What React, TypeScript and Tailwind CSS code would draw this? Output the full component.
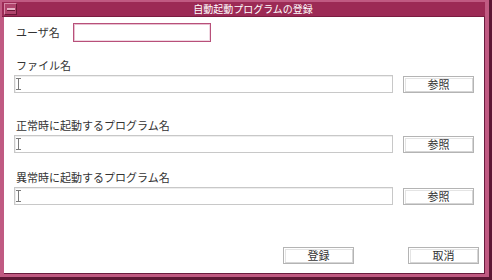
import React from "react";

const font = { fontFamily: '"Noto Sans CJK JP", "Noto Sans", sans-serif' };

const IBeam: React.FC = () => (
  <svg width="5" height="12" viewBox="0 0 5 12" className="ml-[1px]">
    <path d="M0 0.5h5M2.5 0.5v11M0 11.5h5" stroke="#7a7a7a" strokeWidth="1" fill="none" />
  </svg>
);

const Button: React.FC<{ label: string; className?: string }> = ({ label, className = "" }) => (
  <button
    className={`h-[17px] w-[71px] flex items-center justify-center bg-white text-[11px] leading-none text-[#333] border border-[#b4b4b4] shadow-[inset_1px_1px_0_#ffffff,inset_-1px_-1px_0_#d6d6d6,inset_2px_2px_0_#e4e4e4] ${className}`}
  >
    {label}
  </button>
);

const FieldRow: React.FC<{ label: string; labelGap: string }> = ({ label, labelGap }) => (
  <>
    <div className={`${labelGap} ml-[12px] h-[13px] text-[11px] leading-[13px] text-[#333]`}>{label}</div>
    <div className="mt-[3px] ml-[10px] flex items-center gap-[10px]">
      <div className="h-[18px] w-[379px] flex items-center bg-white border border-[#c8c8c8] shadow-[inset_1px_1px_0_#eeeeee]">
        <IBeam />
      </div>
      <Button label="参照" />
    </div>
  </>
);

export default function App() {
  return (
    <div style={font} className="w-[492px] h-[280px] flex flex-col bg-[#c05a82] pl-[4px] pt-[2px] pr-[4px] pb-[3px] border-r-[3px] border-b-[3px] border-[#5c1734]">
      {/* title bar */}
      <div className="h-[15px] -ml-[2px] flex items-center bg-[#9c2a55] border-b border-[#7a1c40]">
        <div className="ml-[2px] w-[13px] h-[12px] flex items-center justify-center bg-[#b0446c] border border-t-[#d88aa8] border-l-[#d88aa8] border-b-[#6a1836] border-r-[#6a1836]">
          <div className="w-[8px] h-[3px] bg-[#e6b0c4] border-b border-[#6a1836]" />
        </div>
        <div className="flex-1 text-center text-white text-[10px] leading-none pl-[4px]">自動起動プログラムの登録</div>
      </div>
      {/* content */}
      <div className="flex-1 flex flex-col bg-white border-r border-b border-[#6a1c3e]">
        <div className="mt-[6px] h-[19px] flex items-center">
          <div className="ml-[12px] w-[57px] text-[11px] text-[#333]">ユーザ名</div>
          <div className="h-[19px] w-[138px] bg-white border border-[#b8507a] shadow-[inset_1px_1px_0_#e8c0d0,inset_-1px_-1px_0_#f0d8e2]" />
        </div>
        <FieldRow label="ファイル名" labelGap="mt-[17px]" />
        <FieldRow label="正常時に起動するプログラム名" labelGap="mt-[26px]" />
        <FieldRow label="異常時に起動するプログラム名" labelGap="mt-[18px]" />
        <div className="mt-[42px] flex">
          <Button label="登録" className="ml-[279px]" />
          <Button label="取消" className="ml-[54px]" />
        </div>
      </div>
    </div>
  );
}
